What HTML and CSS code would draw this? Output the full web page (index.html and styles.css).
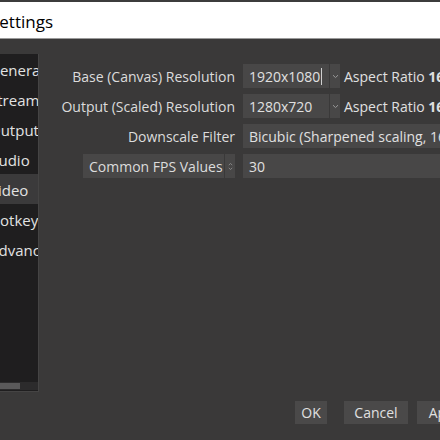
FILE: index.html
```html
<!DOCTYPE html>
<html>
<head>
<meta charset="utf-8">
<link rel="stylesheet" href="styles.css">
</head>
<body>
<div class="window">
  <div class="titlebar"><span class="title">Settings</span></div>
  <div class="body">
    <div class="sidebar">
      <ul class="list">
        <li>General</li>
        <li>Stream</li>
        <li>Output</li>
        <li>Audio</li>
        <li class="sel">Video</li>
        <li>Hotkeys</li>
        <li>Advanced</li>
      </ul>
      <div class="hscroll"><div class="thumb"></div></div>
    </div>
    <div class="main">
      <div class="form">
        <div class="label">Base (Canvas) Resolution</div>
        <div class="field">
          <div class="combo short"><span class="val">1920x1080<span class="caret"></span></span><span class="arrow"><svg width="7" height="5" viewBox="0 0 7 5"><path d="M1 1.2 L3.5 3.6 L6 1.2" fill="none" stroke="#9a9a9a" stroke-width="1"/></svg></span></div>
          <span class="aspect">Aspect Ratio <b>16:9</b></span>
        </div>
        <div class="label">Output (Scaled) Resolution</div>
        <div class="field">
          <div class="combo short"><span class="val">1280x720</span><span class="arrow"><svg width="7" height="5" viewBox="0 0 7 5"><path d="M1 1.2 L3.5 3.6 L6 1.2" fill="none" stroke="#9a9a9a" stroke-width="1"/></svg></span></div>
          <span class="aspect">Aspect Ratio <b>16:9</b></span>
        </div>
        <div class="label">Downscale Filter</div>
        <div class="field">
          <div class="combo wide"><span class="val">Bicubic (Sharpened scaling, 16 samples)</span></div>
        </div>
        <div class="label">
          <div class="fpsbtn"><span>Common FPS Values</span><span class="updown"><svg width="5" height="9" viewBox="0 0 5 9"><path d="M0.8 3.2 L2.5 1.4 L4.2 3.2 M0.8 5.8 L2.5 7.6 L4.2 5.8" fill="none" stroke="#8a8a8a" stroke-width="0.9"/></svg></span></div>
        </div>
        <div class="field">
          <div class="combo wide"><span class="val">30</span></div>
        </div>
      </div>
      <div class="buttons">
        <button class="btn ok">OK</button>
        <button class="btn cancel">Cancel</button>
        <button class="btn apply">Apply</button>
      </div>
    </div>
  </div>
</div>
</body>
</html>
```

FILE: styles.css
```css
html, body {
  margin: 0;
  padding: 0;
  width: 440px;
  height: 440px;
  overflow: hidden;
  background: #3a3939;
  font-family: "Open Sans", "Noto Sans", sans-serif;
}
.window {
  width: 440px;
  height: 440px;
  display: flex;
  flex-direction: column;
}
.titlebar {
  height: 36px;
  background: #ffffff;
  border-top: 2px solid #3c3c3c;
  border-bottom: 1px solid #9a9a9a;
  display: flex;
  align-items: center;
  overflow: hidden;
  box-sizing: content-box;
}
.title {
  margin-left: -10px;
  font-size: 17px;
  color: #000;
  margin-top: 2px;
}
.body {
  flex: 1;
  display: flex;
  padding-top: 15px;
}
.sidebar {
  margin-left: -60px;
  width: 99px;
  height: 338px;
  background: #1f1e1f;
  border-right: 1px solid #454444;
  border-bottom: 1px solid #454444;
  box-sizing: border-box;
  display: flex;
  flex-direction: column;
  overflow: hidden;
  flex-shrink: 0;
}
.list {
  list-style: none;
  margin: 0;
  padding: 0;
  flex: 1;
}
.list li {
  height: 30px;
  line-height: 32px;
  padding-left: 49px;
  font-size: 15px;
  color: #e2e2e2;
  white-space: nowrap;
}
.list li.sel {
  background: #3b3a3b;
}
.hscroll {
  height: 8px;
  background: #2c2b2c;
  margin-bottom: 1px;
  display: flex;
}
.thumb {
  width: 80px;
  height: 6px;
  margin-top: 1px;
  background: #5a595a;
}
.main {
  flex: 1;
  display: flex;
  flex-direction: column;
  min-width: 0;
}
.form {
  display: grid;
  grid-template-columns: 196px 1fr;
  column-gap: 8px;
  row-gap: 6px;
  grid-auto-rows: 24px;
  margin-top: 10px;
}
.label {
  display: flex;
  align-items: center;
  justify-content: flex-end;
  font-size: 14px;
  color: #dcdcdc;
  white-space: nowrap;
}
.field {
  display: flex;
  align-items: center;
  min-width: 0;
  white-space: nowrap;
}
.combo {
  height: 24px;
  background: #484747;
  display: flex;
  align-items: center;
  font-size: 14px;
  color: #e0e0e0;
  box-sizing: border-box;
  flex-shrink: 0;
}
.combo.short {
  width: 97px;
}
.combo.wide {
  width: 260px;
}
.val {
  flex: 1;
  padding-left: 6px;
  display: flex;
  align-items: center;
  white-space: nowrap;
}
.caret {
  display: inline-block;
  width: 1px;
  height: 17px;
  background: #cfcfcf;
  margin-left: 1px;
}
.arrow {
  width: 11px;
  height: 100%;
  border-left: 1px solid #3a3939;
  display: flex;
  align-items: center;
  justify-content: center;
  box-sizing: border-box;
}
.aspect {
  margin-left: 4px;
  font-size: 14px;
  color: #e0e0e0;
}
.aspect b {
  font-weight: 700;
}
.fpsbtn {
  width: 152px;
  height: 24px;
  background: #484747;
  display: flex;
  align-items: center;
  justify-content: space-between;
  padding-left: 6px;
  box-sizing: border-box;
  font-size: 14px;
  color: #dcdcdc;
}
.updown {
  width: 10px;
  height: 100%;
  border-left: 1px solid #3a3939;
  display: flex;
  align-items: center;
  justify-content: center;
}
.buttons {
  margin-top: auto;
  margin-bottom: 16px;
  display: flex;
  padding-left: 256px;
}
.btn {
  height: 23px;
  background: #4a4949;
  border: none;
  color: #e0e0e0;
  font-family: "Open Sans", "Noto Sans", sans-serif;
  font-size: 14px;
  padding: 0;
  flex-shrink: 0;
}
.ok { width: 32px; margin-right: 17px; }
.cancel { width: 64px; margin-right: 9px; }
.apply { width: 60px; }
```
